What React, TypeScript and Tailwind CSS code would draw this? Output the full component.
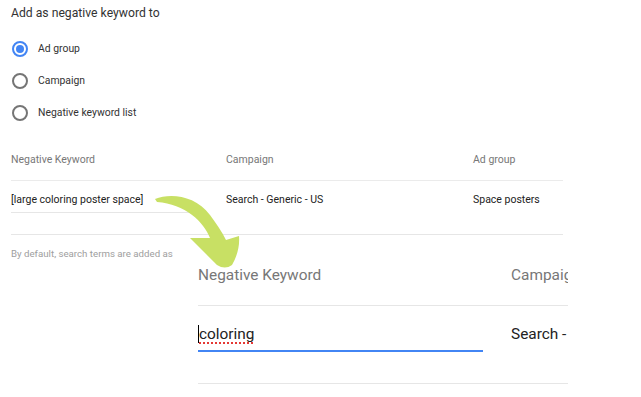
import React from "react";

function Radio({ checked, label }: { checked?: boolean; label: string }) {
  return (
    <div className="flex h-[32px] items-center">
      <div className="flex w-[26px] items-center">
        {checked ? (
          <div className="flex h-[16px] w-[16px] items-center justify-center rounded-full border-2 border-[#4285f4]">
            <div className="h-[8px] w-[8px] rounded-full bg-[#4285f4]" />
          </div>
        ) : (
          <div className="h-[16px] w-[16px] rounded-full border-2 border-[#757575]" />
        )}
      </div>
      <span className="text-[10.4px] leading-[16px] text-[#333]">{label}</span>
    </div>
  );
}

export default function App() {
  return (
    <div
      className="relative h-[397px] w-[641px] overflow-hidden bg-white"
      style={{ fontFamily: "Roboto, 'Liberation Sans', sans-serif" }}
    >
      <div className="px-[11px]">
        <div className="flex h-[26px] items-center text-[12.2px] text-[#333]">
          Add as negative keyword to
        </div>
        <div className="mb-[-1px] mt-[7px] pl-[1px]">
          <Radio checked label="Ad group" />
          <Radio label="Campaign" />
          <Radio label="Negative keyword list" />
        </div>

        <div className="w-[552px]">
          <div className="flex border-b border-[#ebebeb] pb-[12px] pt-[24px] text-[10.5px] leading-[16px] text-[#777]">
            <div className="w-[215px]">Negative Keyword</div>
            <div className="w-[247px]">Campaign</div>
            <div>Ad group</div>
          </div>
          <div className="flex border-b border-[#e6e6e6] pb-[21px] pt-[11px] text-[10.5px] leading-[16px] text-[#222]">
            <div className="w-[215px]">
              <div className="w-[196px] border-b border-[#e6e6e6] pb-[4px]">
                [large coloring poster space]
              </div>
            </div>
            <div className="w-[247px]">Search - Generic - US</div>
            <div>Space posters</div>
          </div>
        </div>

        <div className="mt-[12px] text-[9.7px] leading-[14px] text-[#9e9e9e]">
          By default, search terms are added as
        </div>
      </div>

      <div className="relative ml-[198px] w-[370px] overflow-hidden bg-white">
        <div className="flex whitespace-nowrap border-b border-[#e6e6e6] pb-[20px] pt-[4px] text-[15.4px] leading-[20px] text-[#777]">
          <div className="w-[313px] shrink-0">Negative Keyword</div>
          <div className="shrink-0">Campaign</div>
        </div>
        <div className="flex whitespace-nowrap border-b border-[#e6e6e6] pb-[31px] pt-[18px] text-[15.4px] leading-[20px] text-[#222]">
          <div className="w-[313px] shrink-0">
            <div className="w-[285px] border-b-2 border-[#4285f4] pb-[6px]">
              <span className="border-l border-black">
                <span className="underline decoration-[#e53935] decoration-dotted decoration-[1.5px] underline-offset-[3px]">
                  coloring
                </span>
              </span>
            </div>
          </div>
          <div className="shrink-0">Search - Generic - US</div>
        </div>
      </div>

      <svg
        className="absolute left-0 top-0"
        width="641"
        height="397"
        viewBox="0 0 641 397"
      >
        <path
          d="M155,199 C170,193 195,195 210,215 C216,223 222,232 226,240 L239,236 C240,248 236,258 232,265 Q225,270 217,265 L190,238 L210,238 C204,222 185,204 157,202 Z"
          fill="#c8e064"
        />
      </svg>
    </div>
  );
}
